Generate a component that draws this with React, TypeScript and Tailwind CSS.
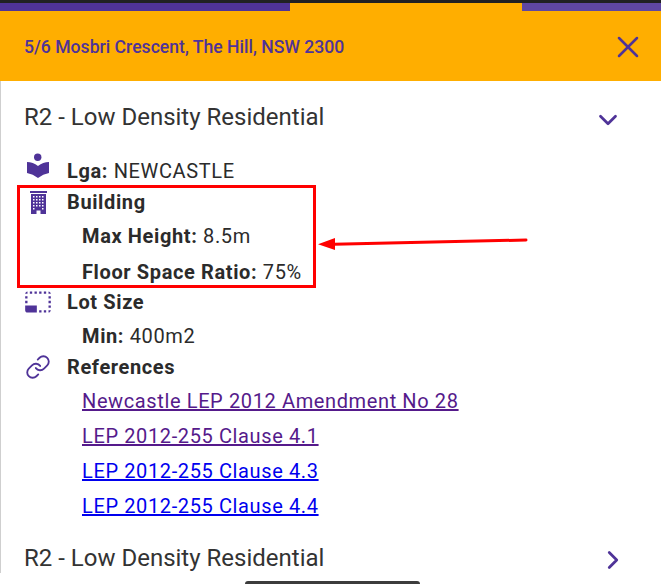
import { ChevronDown, ChevronRight, Link as LinkIcon, X } from "lucide-react";
import { MdPhotoSizeSelectSmall } from "react-icons/md";

const links = [
  { label: "Newcastle LEP 2012 Amendment No 28", visited: true },
  { label: "LEP 2012-255 Clause 4.1", visited: true },
  { label: "LEP 2012-255 Clause 4.3", visited: false },
  { label: "LEP 2012-255 Clause 4.4", visited: false },
];

const windowCols = [3, 6, 9, 12];
const windowRows = [5, 8, 11, 14, 17];

function IconCell({ children }: { children: React.ReactNode }) {
  return <div className="flex w-[43px] shrink-0 justify-start text-[#4f3398]">{children}</div>;
}

function ReaderIcon() {
  return (
    <svg className="-translate-y-[5px] ml-[2px]" width="24" height="28" viewBox="0 0 24 28" fill="currentColor">
      <circle cx="11.7" cy="5.3" r="3.7" />
      <path d="M1 10 Q7 10 12 14 Q17 10 23 10 V21 Q17 22 12 26 Q7 22 1 21 Z" />
    </svg>
  );
}

function BuildingIcon() {
  return (
    <svg className="ml-[6px]" width="17" height="23" viewBox="0 0 17 23" fill="currentColor">
      <rect x="0" y="0" width="17" height="2" />
      <rect x="1" y="3" width="15" height="20" />
      <rect x="6.5" y="19.5" width="4" height="3.5" fill="#ffffff" />
      {windowCols.map((x) =>
        windowRows
          .filter((y) => y !== 17 || x === 3 || x === 12)
          .map((y) => <rect key={`${x}-${y}`} x={x} y={y} width="1.5" height="1.5" fill="#ffffff" />),
      )}
    </svg>
  );
}

export default function App() {
  return (
    <div className="relative h-[584px] w-[661px] overflow-hidden bg-white font-['Roboto',sans-serif] text-[#2b2b2b]">
      <div className="h-[3px] bg-[#202124]" />

      {/* Tabs */}
      <div className="flex h-2">
        <div className="w-[290px] bg-[#4f3398]" />
        <div className="w-[232px] bg-[#ffae00]" />
        <div className="flex-1 bg-[#5f47a3]" />
      </div>

      {/* Address header */}
      <header className="flex h-[70px] items-center justify-between bg-[#ffae00] pl-6 pr-[15px]">
        <span className="pt-[3px] text-[17.6px] font-medium text-[#4f3398]">5/6 Mosbri Crescent, The Hill, NSW 2300</span>
        <X className="h-9 w-9 translate-y-[1px] text-[#4f3398]" strokeWidth={1.7} />
      </header>

      <main className="border-l border-[#cfcfcf] pl-[23px] pr-[43px]">
        <div className="flex h-[72px] items-center justify-between">
          <span className="text-[24px] text-[#333333]">R2 - Low Density Residential</span>
          <ChevronDown className="h-[30px] w-[30px] translate-x-[5px] translate-y-[3px] text-[#4f3398]" strokeWidth={2.2} />
        </div>

        <div className="mt-[6px] text-[20px] leading-[24px] tracking-[0.62px]">
          <div className="flex h-[24px] items-center">
            <IconCell>
              <ReaderIcon />
            </IconCell>
            <span>
              <b className="font-bold">Lga:</b> NEWCASTLE
            </span>
          </div>

          <div className="mt-[7px] flex h-[24px] items-center">
            <IconCell>
              <BuildingIcon />
            </IconCell>
            <b className="font-bold">Building</b>
          </div>
          <div className="mt-[10px] pl-[58px]">
            <b className="font-bold">Max Height:</b> 8.5m
          </div>
          <div className="mt-[12px] pl-[58px]">
            <b className="font-bold">Floor Space Ratio:</b> 75%
          </div>

          <div className="mt-[6px] flex h-[24px] items-center">
            <IconCell>
              <MdPhotoSizeSelectSmall className="h-[28px] w-[28px] shrink-0" />
            </IconCell>
            <b className="font-bold">Lot Size</b>
          </div>
          <div className="mt-[10px] pl-[58px]">
            <b className="font-bold">Min:</b> 400m2
          </div>

          <div className="mt-[7px] flex h-[24px] items-center">
            <IconCell>
              <LinkIcon className="ml-[1px] h-[26px] w-[26px] shrink-0" strokeWidth={1.7} />
            </IconCell>
            <b className="font-bold">References</b>
          </div>
          <ul className="mt-[10px] flex flex-col gap-[11px] pl-[58px]">
            {links.map((l) => (
              <li key={l.label}>
                <a href="#" className={l.visited ? "text-[#551a8b] underline" : "text-[#0000ee] underline"}>
                  {l.label}
                </a>
              </li>
            ))}
          </ul>
        </div>

        <div className="mt-[25px] flex h-[30px] items-center justify-between">
          <span className="text-[24px] text-[#333333]">R2 - Low Density Residential</span>
          <ChevronRight className="h-[30px] w-[30px] translate-x-[10px] translate-y-[2px] text-[#4f3398]" strokeWidth={2.2} />
        </div>
      </main>

      {/* Annotation drawn over the screenshot */}
      <div className="absolute left-[17px] top-[185px] h-[103px] w-[299px] border-[3px] border-[#ff0000]" />
      <svg className="absolute left-[316px] top-[232px]" width="214" height="24" viewBox="0 0 214 24">
        <path d="M210 8 L18 12.3" stroke="#ff0000" strokeWidth="3" strokeLinecap="round" />
        <path d="M2 12.3 L19 6 L19 18 Z" fill="#ff0000" />
      </svg>
      <div className="absolute bottom-0 left-[245px] h-[3px] w-[175px] rounded-t-md bg-[#3c3c3c]" />
    </div>
  );
}
